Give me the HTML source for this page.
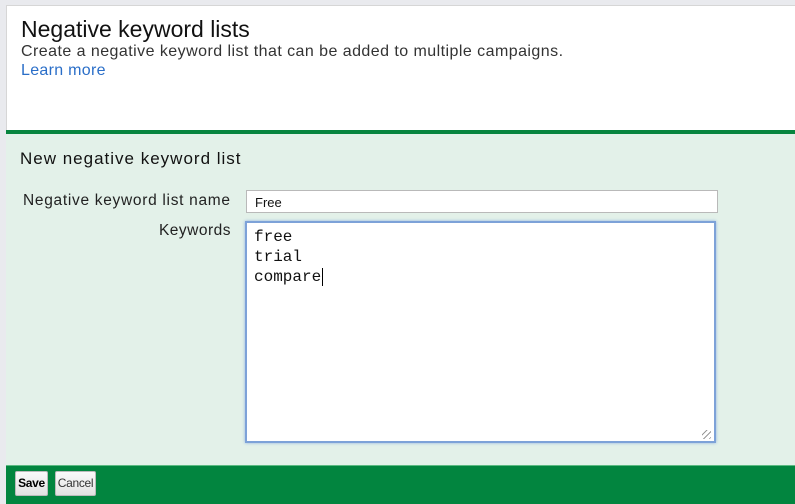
<!DOCTYPE html>
<html><head><meta charset="utf-8"><style>
*{margin:0;padding:0;box-sizing:border-box}
body{width:795px;height:504px;overflow:hidden;background:#e9eaee;font-family:"Liberation Sans",Arial,sans-serif;position:relative}
.panel{position:absolute;left:6px;top:5px;right:0;bottom:0;background:#fff;border-top:1px solid #d6d6d6;border-left:1px solid #d6d6d6}
.h1{position:absolute;left:21px;top:16px;font-size:23px;color:#111}
.sub{position:absolute;left:21px;top:43px;font-size:16px;letter-spacing:0.45px;color:#333}
.lm{position:absolute;left:21px;top:62px;font-size:16px;letter-spacing:0.3px;color:#2a6ec8}
.bar{position:absolute;left:6px;right:0;top:130px;height:4px;background:#07853f}
.form{position:absolute;left:6px;right:0;top:134px;height:331px;background:#e3f1e9}
.h2{position:absolute;left:20px;top:149px;font-size:17px;letter-spacing:1px;color:#111}
.l1{position:absolute;left:23px;top:192px;font-size:15.5px;letter-spacing:0.7px;color:#222}
.l2{position:absolute;right:564px;top:222px;font-size:15.5px;letter-spacing:0.5px;color:#222}
.inp{position:absolute;left:246px;top:190px;width:472px;height:23px;background:#fff;border:1px solid #b9b9b9;font-size:13px;padding:4px 8px;color:#111}
.ta{position:absolute;left:245px;top:221px;width:471px;height:222px;background:#fff;border:2px solid #7da2d8;box-shadow:0 0 3px #8fb0e0;font-family:"Liberation Mono",monospace;font-size:16px;line-height:20px;padding:4px 7px;color:#111}
.foot{position:absolute;left:6px;right:0;top:465px;bottom:0;background:#02853f;border-top:1px solid #5cb982}
.btn{position:absolute;top:471px;height:25px;background:linear-gradient(#fafafa,#e2e2e2);border:1px solid #bbb;border-radius:2px;font-size:12px;text-align:center;line-height:23px;letter-spacing:-0.3px}
.ri{position:absolute;left:702px;top:430px;width:9px;height:9px;background:repeating-linear-gradient(135deg,transparent 0 3px,#999 3px 4px)}
</style></head><body>
<div class="panel"></div>
<div class="h1">Negative keyword lists</div>
<div class="sub">Create a negative keyword list that can be added to multiple campaigns.</div>
<div class="lm">Learn more</div>
<div class="bar"></div>
<div class="form"></div>
<div class="h2">New negative keyword list</div>
<div class="l1">Negative keyword list name</div>
<div class="l2">Keywords</div>
<div class="inp">Free</div>
<div class="ta">free<br>trial<br>compare<span style="border-left:1px solid #000;margin-left:1px"></span></div>
<div class="ri"></div>
<div class="foot"></div>
<div class="btn" style="left:15px;width:33px;font-weight:bold">Save</div>
<div class="btn" style="left:55px;width:41px;color:#333">Cancel</div>
</body></html>
